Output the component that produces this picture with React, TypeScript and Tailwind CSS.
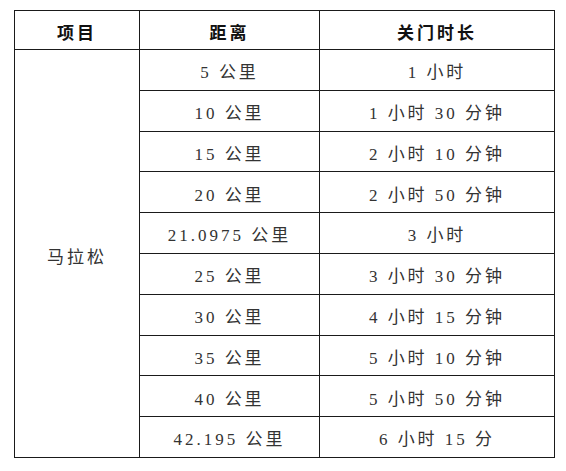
import React from "react";

const rows: [string, string][] = [
  ["5 公里", "1 小时"],
  ["10 公里", "1 小时 30 分钟"],
  ["15 公里", "2 小时 10 分钟"],
  ["20 公里", "2 小时 50 分钟"],
  ["21.0975 公里", "3 小时"],
  ["25 公里", "3 小时 30 分钟"],
  ["30 公里", "4 小时 15 分钟"],
  ["35 公里", "5 小时 10 分钟"],
  ["40 公里", "5 小时 50 分钟"],
  ["42.195 公里", "6 小时 15 分"],
];

export default function App() {
  return (
    <div className="w-[566px] h-[471px] bg-white pt-[10px] pl-[14px] font-['Liberation_Serif','Noto_Sans_CJK_SC',serif]">
      <table className="w-[540px] border-collapse table-fixed text-[17px] text-[#333] tracking-[3px]">
        <colgroup>
          <col className="w-[125px]" />
          <col className="w-[180px]" />
          <col className="w-[235px]" />
        </colgroup>
        <thead>
          <tr className="h-[39px]">
            <th className="border border-[#1a1a1a] font-bold text-[#111] pt-[7px]">项目</th>
            <th className="border border-[#1a1a1a] font-bold text-[#111] pt-[7px]">距离</th>
            <th className="border border-[#1a1a1a] font-bold text-[#111] pt-[7px]">关门时长</th>
          </tr>
        </thead>
        <tbody>
          {rows.map(([dist, time], i) => (
            <tr key={dist} className="h-[40.8px]">
              {i === 0 && (
                <td rowSpan={rows.length} className="border border-[#1a1a1a] text-center pt-[8px]">
                  马拉松
                </td>
              )}
              <td className="border border-[#1a1a1a] text-center pt-[6px]">{dist}</td>
              <td className="border border-[#1a1a1a] text-center pt-[6px]">{time}</td>
            </tr>
          ))}
        </tbody>
      </table>
    </div>
  );
}
